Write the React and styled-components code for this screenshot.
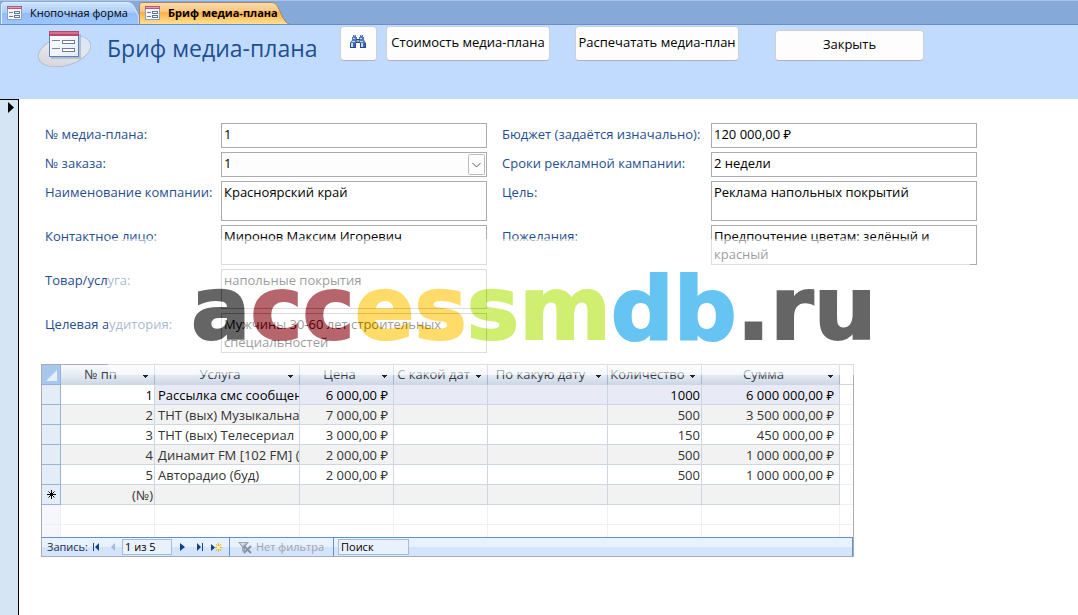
import React, { useState } from 'react'
import styled, { createGlobalStyle } from 'styled-components'

const GlobalStyle = createGlobalStyle`
  * {
    box-sizing: border-box;
  }

  body {
    margin: 0;
    background: #fff;
    font-family: 'Open Sans', 'Noto Sans', sans-serif;
    font-size: 13px;
    line-height: 18px;
    color: #000;
  }

  button, input, select, textarea {
    margin: 0;
    font: inherit;
    color: inherit;
  }
`

const Page = styled.div`
  display: flex;
  flex-direction: column;
  min-height: 100vh;
`

const TabBar = styled.nav`
  display: flex;
  height: 25px;
  padding: 1px 0 0 1px;
  border-top: 1px solid #a9c4e8;
  border-bottom: 1px solid #6490d0;
  background: #87a9d7;
`

const Tab = styled.button`
  position: relative;
  display: flex;
  align-items: center;
  gap: 8px;
  width: ${props => (props.$active ? '152px' : '138px')};
  padding: 0 0 0 6px;
  border: none;
  background: none;
  font-size: 11px;
  font-weight: ${props => (props.$active ? 700 : 400)};
  line-height: 16px;
  white-space: nowrap;

  > * {
    position: relative;
  }
`

const TabShape = styled.svg`
  && {
    position: absolute;
    top: 0;
    left: 0;
    width: 100%;
    height: 100%;
  }
`

const Header = styled.header`
  display: flex;
  align-items: flex-start;
  height: 74px;
  padding: 1px 24px 0 37px;
  background: #c1dbff;
`

const Title = styled.h1`
  width: 233px;
  margin: 5px 0 0 16px;
  color: #1f4e8f;
  font-size: 23px;
  font-weight: 400;
  line-height: 34px;
  white-space: nowrap;
`

const Button = styled.button`
  display: flex;
  align-items: center;
  justify-content: center;
  width: ${props => props.$width};
  height: ${props => (props.$low ? '31px' : '35px')};
  margin-top: ${props => (props.$low ? '4px' : 0)};
  margin-right: ${props => props.$gap || 0};
  padding: 0 0 3px;
  border: 1px solid #cfcfd4;
  border-bottom-color: #b4b4b8;
  border-radius: 4px;
  background: #fdfdfd;
  white-space: nowrap;
`

const Body = styled.main`
  position: relative;
  display: flex;
  flex: 1;
`

const RecordSelector = styled.aside`
  flex: none;
  width: 19px;
  padding: 2px 0 0 8px;
  border-top: 1px solid #000;
  border-right: 1px solid #000;
  background: #d6e5f3;

  svg {
    display: block;
  }
`

const Content = styled.div`
  flex: 1;
  min-width: 0;
  padding: 24px 101px 24px 22px;
`

const Fields = styled.form`
  display: flex;
  align-items: flex-start;
  gap: 15px;
  margin-left: 4px;
`

const FieldColumn = styled.div`
  display: grid;
  flex: 1 1 ${props => props.$label};
  grid-template-columns: ${props => props.$label} minmax(0, 1fr);
  row-gap: 4px;
  min-width: 0;
`

const Label = styled.label`
  padding-top: 2px;
  color: #1f4e8f;
  white-space: nowrap;
`

const TextInput = styled.input`
  width: 100%;
  height: 25px;
  padding: 0 2px 3px;
  border: 1px solid #ababb0;
  border-radius: 0;
  background: #fff;
`

const TextArea = styled.textarea`
  display: block;
  width: 100%;
  height: 40px;
  padding: 1px 2px;
  border: 1px solid #ababb0;
  border-radius: 0;
  background: #fff;
  resize: none;
  overflow: hidden;
`

const Combo = styled.div`
  position: relative;
  height: 25px;

  select {
    width: 100%;
    height: 25px;
    padding: 0 24px 3px 2px;
    border: 1px solid #ababb0;
    border-radius: 0;
    background: #fdfdfd;
    appearance: none;
  }

  svg {
    position: absolute;
    top: 2px;
    right: 2px;
    pointer-events: none;
  }
`

const Subform = styled.section`
  max-width: 813px;
  margin-top: 11px;
  border: 1px solid #ababb0;
`

const Table = styled.table`
  width: 100%;
  border-collapse: separate;
  border-spacing: 0;
  table-layout: fixed;

  th, td {
    height: 20px;
    padding: 0 2px;
    overflow: hidden;
    border-right: 1px solid #cfd6e3;
    border-bottom: 1px solid #cfd6e3;
    line-height: 18px;
    font-weight: 400;
    white-space: nowrap;
  }

  th:last-child, td:last-child {
    border-right: none;
  }
`

const HeadCell = styled.th`
  && {
    padding: 0 2px 1px 0;
    border-right-color: #a3b8d2;
    line-height: 17px;
  }

  background: linear-gradient(#fafbfd, #e6ecf3 50%, #cdd8e6);
  color: #333c48;

  div {
    display: flex;
    align-items: center;
  }

  span {
    flex: 1;
    text-align: center;
  }
`

const CornerCell = styled.th`
  && {
    padding: 0;
    border-color: #8fb1db;
  }

  background: #a9c7ec;

  svg {
    display: block;
  }
`

const SelectorCell = styled.td`
  &&& {
    padding: 0 0 0 4px;
    border-color: ${props => (props.$faint ? '#eceff8' : '#96b3d8')};
    background: ${props => (props.$faint ? '#f6f7fd' : '#e4ecf7')};
  }

  svg {
    display: block;
  }
`

const Row = styled.tr`
  color: ${props => (props.$current ? '#000' : '#333')};

  td {
    background: ${props => (props.$current ? '#e8ebf5' : props.$even ? '#f2f2f2' : '#fff')};
  }

  td:nth-child(2) {
    background: ${props => (props.$even ? '#f2f2f2' : '#fff')};
  }

  td:last-child {
    border-bottom-color: #f0f1f5;
    background: #fff;
  }
`

const BlankRow = styled.tr`
  && td {
    height: ${props => props.$height};
    border-color: #f0f1f5;
    border-bottom-width: ${props => (props.$last ? 0 : '1px')};
  }
`

const Cell = styled.td`
  text-align: ${props => props.$align || 'left'};

  && {
    padding: ${props => (props.$money ? '0 5px 0 0' : '0 1px 0 3px')};
  }
`

const RecordNav = styled.div`
  display: flex;
  align-items: center;
  height: 19px;
  border: 1px solid #6490d0;
  border-width: 1px 1px 0 0;
  background: linear-gradient(#e8f1fe 50%, #d3e4fc 50%);
  font-size: 11px;
  line-height: 14px;
  white-space: nowrap;
`

const NavPart = styled.div`
  display: flex;
  align-items: center;
  width: ${props => props.$width};
  height: 18px;
  padding-left: ${props => props.$pad};
  border-right: 1px solid #6490d0;

  label {
    width: 41px;
    color: #1c2f4f;
  }
`

const NavButton = styled.button`
  display: flex;
  align-items: center;
  justify-content: center;
  width: 17px;
  height: 16px;
  padding: 0;
  border: none;
  background: none;
`

const NavInput = styled.input`
  width: 50px;
  height: 16px;
  margin-right: 2px;
  padding: 0 2px 1px;
  border: 1px solid #a3bde0;
  background: #e9f1fc;
`

const SearchInput = styled(NavInput)`
  width: 71px;
  margin-left: 4px;

  &::placeholder {
    color: #000;
    opacity: 1;
  }
`

const FilterButton = styled.button`
  display: flex;
  align-items: center;
  gap: 4px;
  padding: 0;
  border: none;
  background: none;

  &:disabled {
    color: #9fa3ab;
  }
`

const Watermark = styled.div`
  position: absolute;
  top: 140px;
  left: 108px;
  width: 862px;
  height: 136px;
  padding-left: 83px;
  background: #fff;
  color: #000;
  font-family: 'DejaVu Sans', sans-serif;
  font-size: 88px;
  font-weight: 700;
  line-height: 139px;
  white-space: nowrap;
  opacity: 0.6;
  pointer-events: none;
  -webkit-text-stroke: 2px currentColor;
`

const Tint = styled.span`
  color: ${props => props.$color};
`

const columns = [
  { title: '№ пп', width: 94 },
  { title: 'Услуга', width: 145 },
  { title: 'Цена', width: 94 },
  { title: 'С какой дат', width: 94 },
  { title: 'По какую дату', width: 120 },
  { title: 'Количество', width: 94 },
  { title: 'Сумма', width: 138 },
]

const services = [
  { id: 1, name: 'Рассылка смс сообщений', price: '6 000,00 ₽', count: 1000, sum: '6 000 000,00 ₽' },
  { id: 2, name: 'ТНТ (вых) Музыкальная', price: '7 000,00 ₽', count: 500, sum: '3 500 000,00 ₽' },
  { id: 3, name: 'ТНТ (вых) Телесериал', price: '3 000,00 ₽', count: 150, sum: '450 000,00 ₽' },
  { id: 4, name: 'Динамит FM [102 FM] (буд)', price: '2 000,00 ₽', count: 500, sum: '1 000 000,00 ₽' },
  { id: 5, name: 'Авторадио (буд)', price: '2 000,00 ₽', count: 500, sum: '1 000 000,00 ₽' },
]

const FormIcon = () => (
  <svg width='15' height='14' viewBox='0 0 15 14'>
    <rect x='0.5' y='0.5' width='14' height='13' fill='#f4f7fc' stroke='#8d9fbe' />
    <rect x='0' y='0' width='15' height='3' fill='#b8577a' />
    <rect x='1' y='1' width='13' height='1' fill='#dba0b2' />
    <path d='M2 6.5h4M2 10.5h4' stroke='#6d7d99' />
    <rect x='7.5' y='5.5' width='5' height='2' fill='#fff' stroke='#5f759c' />
    <rect x='7.5' y='9.5' width='5' height='2' fill='#fff' stroke='#5f759c' />
  </svg>
)

const FormLogo = () => (
  <svg width='54' height='42' viewBox='0 0 54 42'>
    <defs>
      <linearGradient id='disc' x1='0' y1='1' x2='1' y2='0'>
        <stop offset='0' stopColor='#cfcfd2' />
        <stop offset='0.5' stopColor='#e3e7ee' />
        <stop offset='1' stopColor='#d4e6ff' />
      </linearGradient>
      <linearGradient id='sheet' x1='0' y1='0' x2='1' y2='1'>
        <stop offset='0' stopColor='#fff' />
        <stop offset='1' stopColor='#e3ebf8' />
      </linearGradient>
    </defs>
    <ellipse cx='27.5' cy='25' rx='27' ry='14.5' transform='rotate(-16 27.5 25)' fill='url(#disc)' stroke='#b4bfd0' />
    <path d='M14 32h29V8' fill='none' stroke='#9aa6ba' strokeWidth='2' opacity='0.6' />
    <rect x='12.5' y='5.5' width='29' height='25' fill='url(#sheet)' stroke='#5c7fb5' />
    <rect x='12' y='5' width='30' height='5' fill='#b8476b' />
    <rect x='13' y='6' width='28' height='2' fill='#cf7590' />
    <path d='M15 14.5h8M15 22.5h8' stroke='#7b8698' />
    <rect x='25.5' y='14.5' width='12' height='3' fill='#fff' stroke='#6d7b93' />
    <rect x='25.5' y='22.5' width='12' height='3' fill='#fff' stroke='#6d7b93' />
  </svg>
)

const Binoculars = () => (
  <svg width='17' height='14' viewBox='0 0 17 14'>
    <path d='M3 0h3v2h1v3h2V2h1V0h3v2h1v3l2 3v5h-6V8H6v5H0V8l2-3V2h1z' fill='#5577b4' />
    <path d='M0 8h1v5H0zM5 8h1v5H5zM10 8h1v5h-1zM15 8h1v5h-1zM0 12h6v1H0zM10 12h6v1h-6z' fill='#27488a' />
    <path d='M1 8h2v4H1zM11 8h2v4h-2z' fill='#c4d7f4' />
    <path d='M3 8h2v4H3zM13 8h2v4h-2z' fill='#4468ab' />
    <path d='M3 3h2v1H3zM10 3h2v1h-2zM4 0h1v1H4zM11 0h1v1h-1zM2 6h3v1H2zM10 6h3v1h-3z' fill='#c4d7f4' />
    <path d='M6 4h4v1H6zM6 7h4v1H6z' fill='#27488a' />
    <path d='M7 5h2v2H7z' fill='#8fade0' />
  </svg>
)

const DropArrow = () => (
  <svg width='12' height='10' viewBox='0 0 12 10'>
    <path d='M3 6h5v1H7v1H6v1H5V8H4V7H3z' fill='#222' />
  </svg>
)

const Funnel = () => (
  <svg width='14' height='13' viewBox='0 0 14 13'>
    <path d='M0 1h11L7 6v6l-3-2V6z' fill='#9aa6b8' />
    <path d='M2 2h6L5 5z' fill='#d5deea' />
    <path d='M6 5l7 7M13 5l-7 7' stroke='#8390a5' strokeWidth='2' />
  </svg>
)

const BriefField = ({ id, label, value, multiline }) => (
  <>
    <Label htmlFor={id}>{label}</Label>
    {multiline ? (
      <TextArea id={id} defaultValue={value} spellCheck={false} />
    ) : (
      <TextInput id={id} type='text' defaultValue={value} />
    )}
  </>
)

const App = () => {
  const [order, setOrder] = useState('1')

  return (
    <>
      <GlobalStyle />
      <Page>
        <TabBar>
          <Tab type='button'>
            <TabShape viewBox='0 0 138 22' preserveAspectRatio='none'>
              <defs>
                <linearGradient id='blueTab' x1='0' y1='0' x2='0' y2='1'>
                  <stop offset='0' stopColor='#cfe3ff' />
                  <stop offset='0.5' stopColor='#a9cbfa' />
                  <stop offset='0.5' stopColor='#93bdf8' />
                  <stop offset='1' stopColor='#9cc5ff' />
                </linearGradient>
              </defs>
              <path d='M0.5 22V3Q0.5 0.5 3 0.5H126Q131 0.5 133 5L138 15V22' fill='url(#blueTab)' stroke='#e2eeff' />
            </TabShape>
            <FormIcon />
            <span>Кнопочная форма</span>
          </Tab>
          <Tab type='button' $active>
            <TabShape viewBox='0 0 152 22' preserveAspectRatio='none'>
              <defs>
                <linearGradient id='orangeTab' x1='0' y1='0' x2='0' y2='1'>
                  <stop offset='0' stopColor='#fddcae' />
                  <stop offset='0.45' stopColor='#fcc377' />
                  <stop offset='0.45' stopColor='#ffae42' />
                  <stop offset='1' stopColor='#ffe093' />
                </linearGradient>
              </defs>
              <path d='M0.5 22V3Q0.5 0.5 3 0.5H132Q137 0.5 139 5L144 16Q147 22 151 22' fill='url(#orangeTab)' stroke='#a08a6c' />
            </TabShape>
            <FormIcon />
            <span>Бриф медиа-плана</span>
          </Tab>
        </TabBar>

        <Header>
          <FormLogo />
          <Title>Бриф медиа-плана</Title>
          <Button type='button' $width='37px' $gap='9px' aria-label='Найти'>
            <Binoculars />
          </Button>
          <Button type='button' $width='164px' $gap='25px'>Стоимость медиа-плана</Button>
          <Button type='button' $width='164px' $gap='36px'>Распечатать медиа-план</Button>
          <Button type='button' $width='149px' $low>Закрыть</Button>
        </Header>

        <Body>
          <RecordSelector>
            <svg width='7' height='11' viewBox='0 0 7 11'>
              <path d='M0 0l6 5.5L0 11z' />
            </svg>
          </RecordSelector>
          <Content>
            <Fields>
              <FieldColumn $label='176px'>
                <BriefField id='plan' label='№ медиа-плана:' value='1' />
                <Label htmlFor='order'>№ заказа:</Label>
                <Combo>
                  <select id='order' value={order} onChange={e => setOrder(e.target.value)}>
                    <option>1</option>
                    <option>2</option>
                  </select>
                  <svg width='17' height='21' viewBox='0 0 17 21'>
                    <rect x='0.5' y='0.5' width='16' height='20' rx='1' fill='#fdfdfd' stroke='#bcbcc0' />
                    <path d='M4.5 9l4 4 4-4' fill='none' stroke='#555' />
                  </svg>
                </Combo>
                <BriefField id='company' label='Наименование компании:' value='Красноярский край' multiline />
                <BriefField id='contact' label='Контактное лицо:' value='Миронов Максим Игоревич' multiline />
                <BriefField id='product' label='Товар/услуга:' value='напольные покрытия' multiline />
                <BriefField
                  id='audience'
                  label='Целевая аудитория:'
                  value='Мужчины 30-60 лет строительных специальностей'
                  multiline
                />
              </FieldColumn>
              <FieldColumn $label='209px'>
                <BriefField id='budget' label='Бюджет (задаётся изначально):' value='120 000,00 ₽' />
                <BriefField id='period' label='Сроки рекламной кампании:' value='2 недели' />
                <BriefField id='goal' label='Цель:' value='Реклама напольных покрытий' multiline />
                <BriefField id='wishes' label='Пожелания:' value='Предпочтение цветам: зелёный и красный' multiline />
              </FieldColumn>
            </Fields>

            <Subform>
              <Table>
                <colgroup>
                  <col style={{ width: 19 }} />
                  {columns.map(column => (
                    <col key={column.title} style={{ width: column.width }} />
                  ))}
                  <col />
                </colgroup>
                <thead>
                  <tr>
                    <CornerCell>
                      <svg width='18' height='19' viewBox='0 0 18 19'>
                        <path d='M15 5v11H4z' fill='#e6effb' />
                      </svg>
                    </CornerCell>
                    {columns.map(column => (
                      <HeadCell key={column.title}>
                        <div>
                          <span>{column.title}</span>
                          <DropArrow />
                        </div>
                      </HeadCell>
                    ))}
                    <th />
                  </tr>
                </thead>
                <tbody>
                  {services.map((service, index) => (
                    <Row key={service.id} $current={index === 0} $even={index % 2 === 1}>
                      <SelectorCell />
                      <Cell $align='right'>{service.id}</Cell>
                      <Cell>{service.name}</Cell>
                      <Cell $align='right' $money>{service.price}</Cell>
                      <Cell />
                      <Cell />
                      <Cell $align='right'>{service.count}</Cell>
                      <Cell $align='right' $money>{service.sum}</Cell>
                      <td />
                    </Row>
                  ))}
                  <Row $even>
                    <SelectorCell>
                      <svg width='11' height='11' viewBox='0 0 11 11'>
                        <path d='M5.5 1v9M1 5.5h9M2.5 2.5l6 6M8.5 2.5l-6 6' stroke='#000' />
                      </svg>
                    </SelectorCell>
                    <Cell $align='right'>(№)</Cell>
                    <Cell />
                    <Cell />
                    <Cell />
                    <Cell />
                    <Cell />
                    <Cell />
                    <td />
                  </Row>
                  <BlankRow $height='20px'>
                    <SelectorCell $faint />
                    {columns.map(column => <td key={column.title} />)}
                    <td />
                  </BlankRow>
                  <BlankRow $height='12px' $last>
                    <SelectorCell $faint />
                    {columns.map(column => <td key={column.title} />)}
                    <td />
                  </BlankRow>
                </tbody>
              </Table>
              <RecordNav>
                <NavPart $width='188px' $pad='5px'>
                  <label htmlFor='record'>Запись:</label>
                  <NavButton type='button' aria-label='Первая запись'>
                    <svg width='7' height='8' viewBox='0 0 7 8'>
                      <path d='M0 0h1v8H0zM6 0v8L2 4z' fill='#12408c' />
                    </svg>
                  </NavButton>
                  <NavButton type='button' aria-label='Предыдущая запись' disabled>
                    <svg width='5' height='8' viewBox='0 0 5 8'>
                      <path d='M4 0v8L0 4z' fill='#a3b9dc' />
                    </svg>
                  </NavButton>
                  <NavInput id='record' defaultValue='1 из 5' />
                  <NavButton type='button' aria-label='Следующая запись'>
                    <svg width='5' height='8' viewBox='0 0 5 8'>
                      <path d='M0 0v8l5-4z' fill='#12408c' />
                    </svg>
                  </NavButton>
                  <NavButton type='button' aria-label='Последняя запись'>
                    <svg width='7' height='8' viewBox='0 0 7 8'>
                      <path d='M6 0h1v8H6zM1 0v8l4-4z' fill='#12408c' />
                    </svg>
                  </NavButton>
                  <NavButton type='button' aria-label='Новая запись'>
                    <svg width='11' height='9' viewBox='0 0 11 9'>
                      <path d='M0 1v7l4-3.5z' fill='#12408c' />
                      <path d='M7.5 0v9M4 4.5h7M5 1l5 7M10 1L5 8' stroke='#e5b820' />
                      <rect x='6' y='3' width='3' height='3' fill='#fff4b0' />
                    </svg>
                  </NavButton>
                </NavPart>
                <NavPart $width='104px' $pad='8px'>
                  <FilterButton type='button' disabled>
                    <Funnel />
                    Нет фильтра
                  </FilterButton>
                </NavPart>
                <SearchInput placeholder='Поиск' aria-label='Поиск' />
              </RecordNav>
            </Subform>
          </Content>

          <Watermark>
            a<Tint $color='#84000a'>cc</Tint>
            <Tint $color='#ffc508'>es</Tint>
            <Tint $color='#b1e311'>sm</Tint>
            <Tint $color='#009de8'>db</Tint>.ru
          </Watermark>
        </Body>
      </Page>
    </>
  )
}

export default App
